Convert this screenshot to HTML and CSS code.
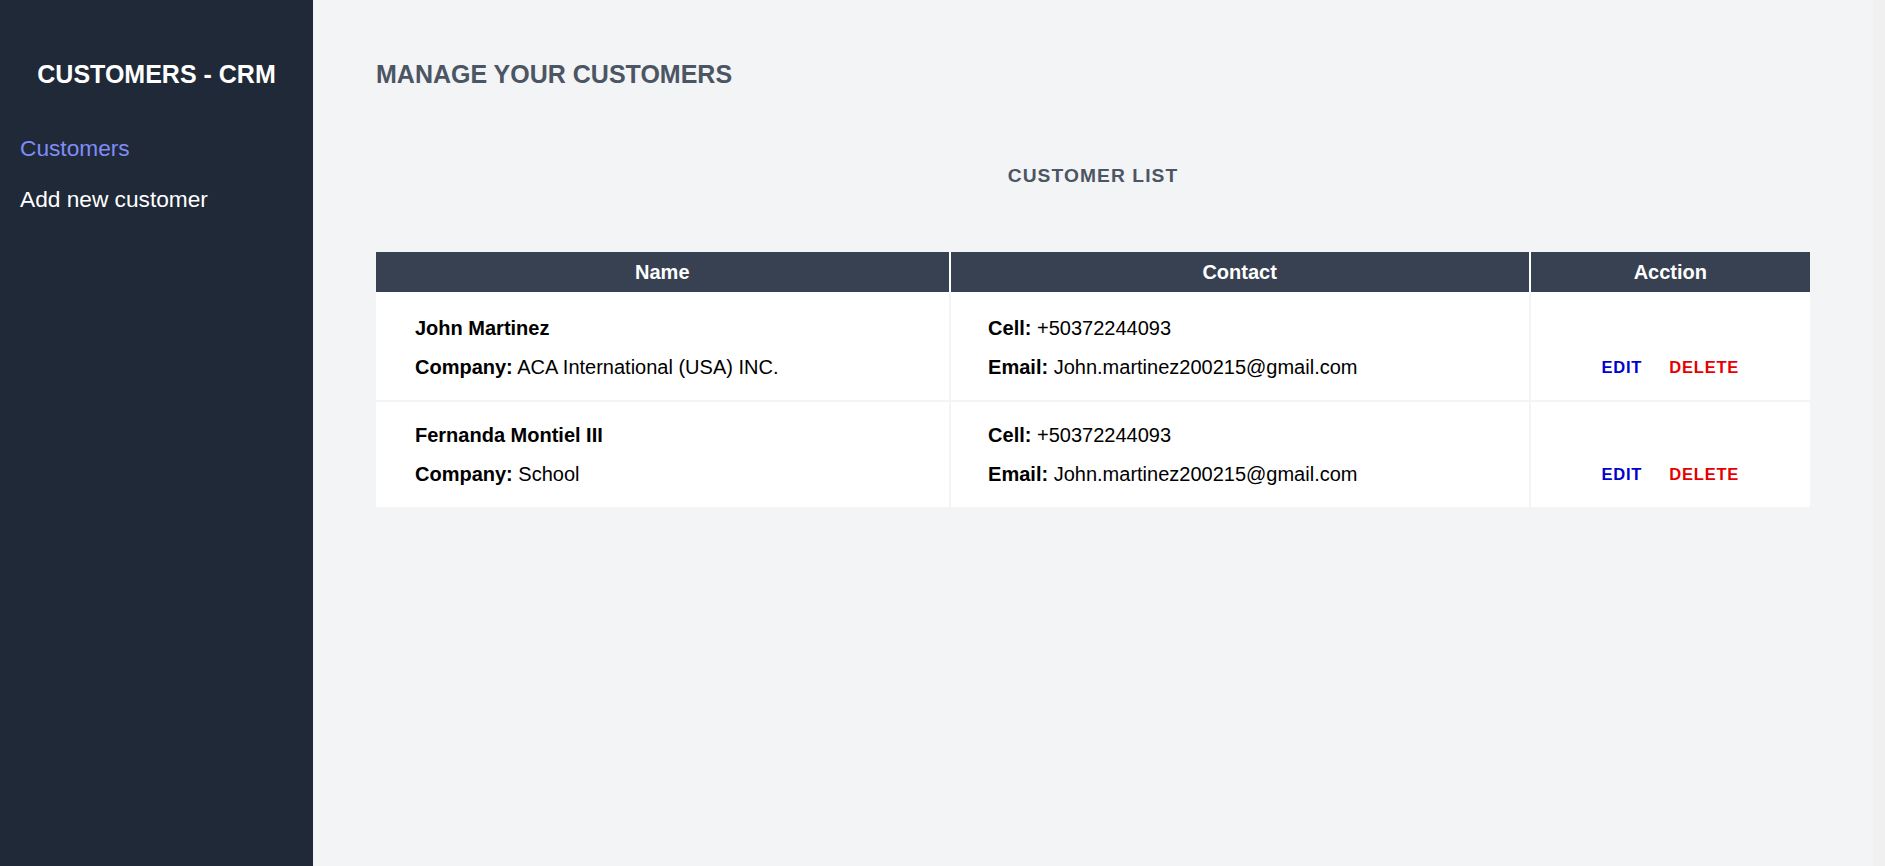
FILE: index.html
```html
<!DOCTYPE html>
<html lang="en">
<head>
<meta charset="utf-8">
<title>Customers - CRM</title>
<link rel="stylesheet" href="styles.css">
</head>
<body>
<div class="layout">
  <aside class="sidebar">
    <h1 class="brand">CUSTOMERS - CRM</h1>
    <nav class="nav">
      <a class="nav-link active" href="#">Customers</a>
      <a class="nav-link" href="#">Add new customer</a>
    </nav>
  </aside>
  <main class="main">
    <h2 class="page-title">MANAGE YOUR CUSTOMERS</h2>
    <h3 class="list-title">CUSTOMER LIST</h3>
    <table class="customers">
      <colgroup>
        <col class="col-name">
        <col class="col-contact">
        <col class="col-action">
      </colgroup>
      <thead>
        <tr><th>Name</th><th>Contact</th><th>Acction</th></tr>
      </thead>
      <tbody>
        <tr class="row-first">
          <td class="cell-name">
            <p class="line"><b>John Martinez</b></p>
            <p class="line"><b>Company:</b> ACA International (USA) INC.</p>
          </td>
          <td class="cell-contact">
            <p class="line"><b>Cell:</b> +50372244093</p>
            <p class="line"><b>Email:</b> John.martinez200215@gmail.com</p>
          </td>
          <td class="actions">
            <div class="action-line"><a class="edit" href="#">EDIT</a><a class="delete" href="#">DELETE</a></div>
          </td>
        </tr>
        <tr class="row-next">
          <td class="cell-name">
            <p class="line"><b>Fernanda Montiel III</b></p>
            <p class="line"><b>Company:</b> School</p>
          </td>
          <td class="cell-contact">
            <p class="line"><b>Cell:</b> +50372244093</p>
            <p class="line"><b>Email:</b> John.martinez200215@gmail.com</p>
          </td>
          <td class="actions">
            <div class="action-line"><a class="edit" href="#">EDIT</a><a class="delete" href="#">DELETE</a></div>
          </td>
        </tr>
      </tbody>
    </table>
  </main>
  <div class="scroll-track" aria-hidden="true"></div>
</div>
</body>
</html>
```

FILE: styles.css
```css
body {
  margin: 0;
  font-family: "Liberation Sans", Arial, sans-serif;
  background: #f3f4f6;
  color: #000;
}
.layout {
  display: flex;
  min-height: 100vh;
}
.sidebar {
  width: 313px;
  flex-shrink: 0;
  background: #1f2937;
  padding-top: 61px;
  box-sizing: border-box;
}
.brand {
  margin: 0;
  color: #fff;
  font-size: 25px;
  font-weight: bold;
  text-align: center;
  line-height: 27.6px;
}
.nav {
  display: flex;
  flex-direction: column;
  gap: 26px;
  padding: 0 20px;
  margin-top: 47px;
}
.nav-link {
  color: #fff;
  text-decoration: none;
  font-size: 22.7px;
  line-height: 25.7px;
}
.nav-link.active {
  color: #818cf8;
}
.main {
  flex: 1;
  padding: 61px 63px;
  min-width: 0;
}
.scroll-track {
  width: 12px;
  flex-shrink: 0;
  background: #f0f0f0;
}
.page-title {
  margin: 0;
  font-size: 25px;
  line-height: 27.6px;
  font-weight: bold;
  color: #4b5563;
}
.list-title {
  margin: 76px 0 0;
  text-align: center;
  font-size: 19.2px;
  line-height: 21.5px;
  letter-spacing: 1.1px;
  font-weight: bold;
  color: #4b5563;
}
.customers {
  margin-top: 66px;
  width: 100%;
  border-collapse: collapse;
  table-layout: fixed;
  background: #fff;
}
.col-name { width: 40%; }
.col-contact { width: 40.45%; }
.customers th {
  background: #374151;
  color: #fff;
  font-size: 20px;
  line-height: 23px;
  font-weight: bold;
  padding: 8.5px 0;
  text-align: center;
}
.customers th + th {
  border-left: 2px solid #fff;
}
.customers td {
  padding: 25px 39px 20.5px;
  vertical-align: top;
  font-size: 20px;
  line-height: 23px;
}
.customers td.cell-contact {
  padding-left: 37.5px;
}
.customers td + td {
  border-left: 2px solid #f3f4f6;
}
.customers tbody tr + tr td {
  border-top: 2px solid #f3f4f6;
  padding-top: 22.8px;
}
.line {
  margin: 0;
}
.line + .line {
  margin-top: 16px;
}
.customers td.actions {
  vertical-align: bottom;
  text-align: center;
  padding-left: 0;
  padding-right: 0;
}
.action-line {
  font-size: 20px;
  line-height: 23px;
  display: flex;
  justify-content: center;
  align-items: baseline;
  gap: 27px;
}
.action-line a {
  font-size: 16.5px;
  font-weight: bold;
  letter-spacing: 0.8px;
  text-decoration: none;
}
.edit {
  color: #0000d0;
}
.delete {
  color: #e60000;
}
```
